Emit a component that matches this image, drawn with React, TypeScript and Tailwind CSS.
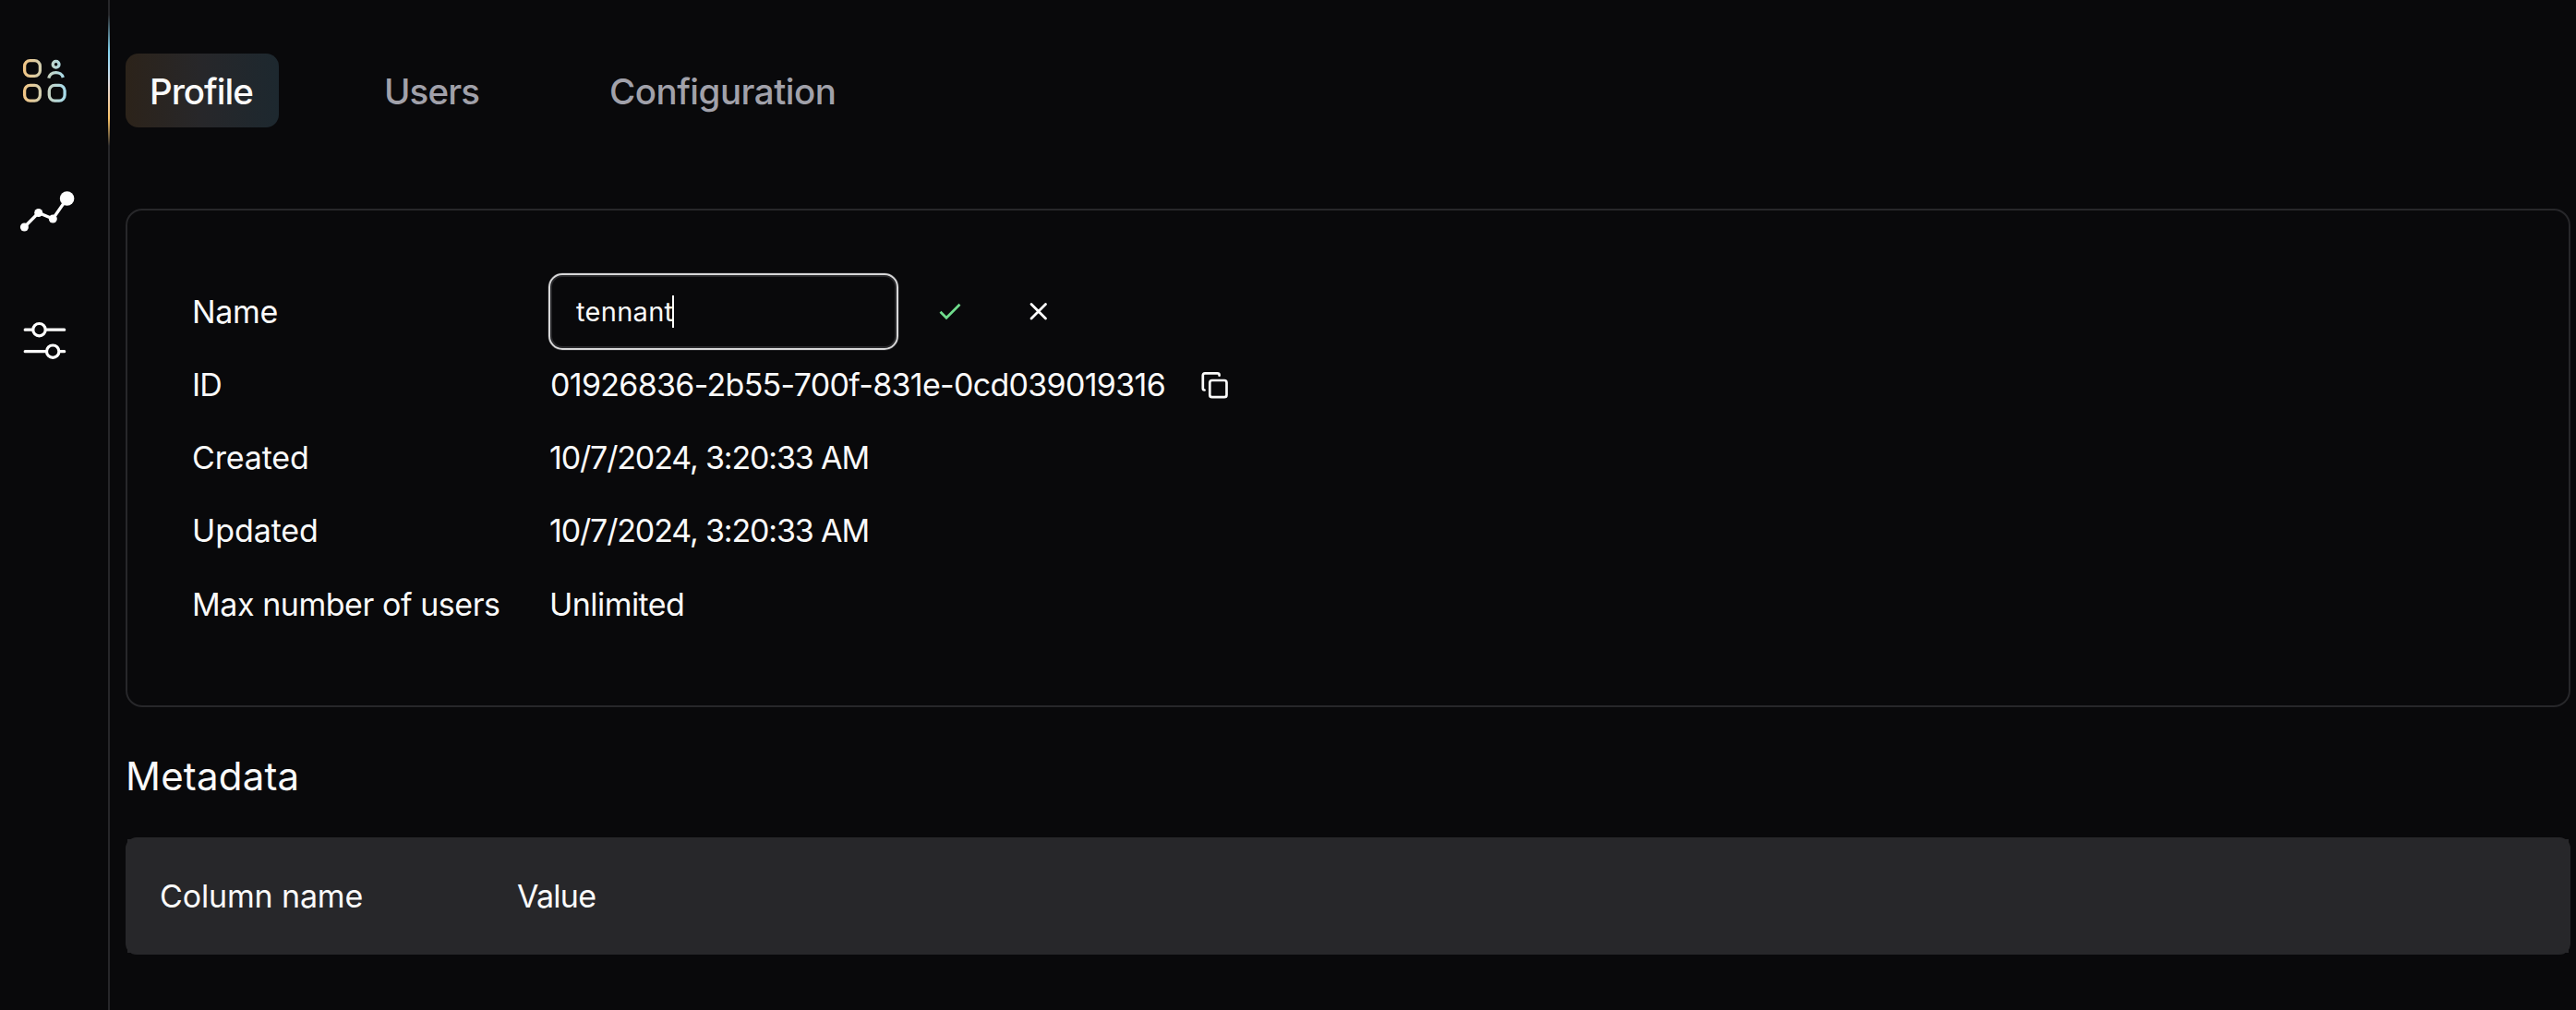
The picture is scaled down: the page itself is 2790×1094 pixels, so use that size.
import React from "react";

const bodyText = "text-[34px] leading-[40px] whitespace-nowrap";

type FieldProps = {
  label: string;
  tracking: string;
  height?: string;
  children: React.ReactNode;
};

function Field({ label, tracking, height = "h-[79px]", children }: FieldProps) {
  return (
    <div className={`flex items-center ${height}`}>
      <div className={`w-[386px] shrink-0 ${bodyText} ${tracking}`}>{label}</div>
      {children}
    </div>
  );
}

function CheckIcon() {
  return (
    <svg className="ml-[44px] h-6 w-6" viewBox="0 0 24 24" fill="none">
      <path d="M1.500 11.800L8 18.300L22.500 3.800" stroke="#6fdc8c" strokeWidth="2.7" />
    </svg>
  );
}

function CloseIcon() {
  return (
    <svg className="ml-[72px] h-6 w-6" viewBox="0 0 24 24" fill="none">
      <path d="M4 3.500L19.500 19M19.500 3.500L4 19" stroke="white" strokeWidth="2.8" strokeLinecap="round" />
    </svg>
  );
}

function CopyIcon() {
  return (
    <svg className="h-8 w-8" viewBox="0 0 32 32" fill="none" stroke="#fafafa" strokeWidth="2.7" strokeLinecap="round">
      <rect x="10.300" y="11" width="18.200" height="18.200" rx="2.500" />
      <path d="M20.600 5.700V5.200C20.600 4 19.900 3.300 18.700 3.300H5C3.600 3.300 2.800 4.100 2.800 5.500V19.500C2.800 20.700 3.300 21.400 4.600 21.500" />
    </svg>
  );
}

export default function App() {
  return (
    <div className="flex h-[1094px] w-[2790px] overflow-hidden bg-[#09090b] font-['Inter',sans-serif] text-[#fafafa]">
      <aside className="relative flex w-[119px] shrink-0 flex-col border-r-2 border-[#27272a]">
        <svg className="h-[400px] w-[117px]" viewBox="0 0 117 400" fill="none">
          <defs>
            <linearGradient id="brand" x1="25" y1="0" x2="72" y2="0" gradientUnits="userSpaceOnUse">
              <stop stopColor="#f3c583" />
              <stop offset="1" stopColor="#a5dcee" />
            </linearGradient>
          </defs>
          <g stroke="url(#brand)" strokeWidth="3.3">
            <rect x="26.600" y="65.600" width="16.800" height="16.800" rx="6" />
            <rect x="26.600" y="92.300" width="16.800" height="16.800" rx="6" />
            <rect x="53.300" y="92.300" width="16.800" height="16.800" rx="6" />
            <circle cx="60.600" cy="69.700" r="3.400" />
            <path d="M52.700 84.700C54.500 76.600 66.500 76.600 68.300 84" />
          </g>
          <path d="M26.400 246L41.700 230.500L57.300 237L72.600 215" stroke="white" strokeWidth="3.3" />
          <g fill="white">
            <circle cx="26.400" cy="246" r="4.500" />
            <circle cx="41.700" cy="230.500" r="4.500" />
            <circle cx="57.300" cy="237" r="4.500" />
            <circle cx="72.600" cy="215" r="7.800" />
          </g>
          <g stroke="white" strokeWidth="3.2" strokeLinecap="round">
            <path d="M27.200 357.200H35M50 357.200H69.700M27.200 380.700H50M64.500 380.700H69.700" />
            <circle cx="42.500" cy="357.200" r="6.700" />
            <circle cx="57.200" cy="380.700" r="6.700" />
          </g>
        </svg>
        <div className="absolute top-[16px] left-[117px] h-[142px] w-[2px] bg-[linear-gradient(180deg,#27272a_0%,#84d4f0_28%,#b9dcf0_42%,#dcd9dc_52%,#f0cfae_64%,#fbc468_79%,#27272a_100%)]" />
      </aside>

      <main className="flex flex-1 flex-col pr-[6px] pl-[17px]">
        <nav className="mt-[58px] flex h-[80px] items-center text-[38.5px] leading-[56px] font-medium text-[#a1a1aa]">
          <div className="flex h-[80px] w-[166px] items-center rounded-[14px] bg-[linear-gradient(90deg,#2c231a,#27272a_50%,#1d282f)] pt-[2px] pl-[26px] tracking-[-1px] text-[#fafafa]">
            Profile
          </div>
          <div className="ml-[114px] w-[244px] pt-[2px] tracking-[-0.9px]">Users</div>
          <div className="pt-[2px] tracking-[-0.5px]">Configuration</div>
        </nav>

        <section className="mt-[88px] h-[540px] rounded-[18px] border-2 border-[#27272a] pt-[70px] pl-[70px]">
          <Field label="Name" tracking="tracking-[-0.3px]">
            <div className="flex h-[83px] w-[379px] items-center rounded-[15px] border-2 border-[#d7d7d8] pl-[28px] text-[29px] shadow-[inset_0_0_0_2px_#27272a,0_0_0_0.5px_#3f3f42]">
              <span className="tracking-[0.3px]">tennant</span>
              <span className="-ml-px h-[35px] w-[2px] bg-white" />
            </div>
            <CheckIcon />
            <CloseIcon />
          </Field>
          <Field label="ID" tracking="tracking-[-0.8px]">
            <span className={`ml-[2px] w-[704px] tracking-[-0.7px] ${bodyText}`}>
              01926836-2b55-700f-831e-0cd039019316
            </span>
            <CopyIcon />
          </Field>
          <Field label="Created" tracking="tracking-[-0.15px]">
            <span className={`ml-[1px] tracking-[-1.15px] ${bodyText}`}>10/7/2024, 3:20:33 AM</span>
          </Field>
          <Field label="Updated" tracking="tracking-[-0.1px]" height="h-[80px]">
            <span className={`ml-[1px] tracking-[-1.15px] ${bodyText}`}>10/7/2024, 3:20:33 AM</span>
          </Field>
          <Field label="Max number of users" tracking="tracking-[-0.45px]">
            <span className={`ml-[1px] tracking-[-0.55px] ${bodyText}`}>Unlimited</span>
          </Field>
        </section>

        <h2 className="mt-[50px] text-[42px] leading-[50px] tracking-[0.2px]">Metadata</h2>
        <div className="mt-[41px] rounded-[12px] border-2 border-[#27272a]">
          <div className="flex h-[123px] items-center bg-[#27272a] px-[35px]">
            <span className={`w-[387px] tracking-[-0.15px] ${bodyText}`}>Column name</span>
            <span className={`tracking-[-0.75px] ${bodyText}`}>Value</span>
          </div>
        </div>
      </main>
    </div>
  );
}
